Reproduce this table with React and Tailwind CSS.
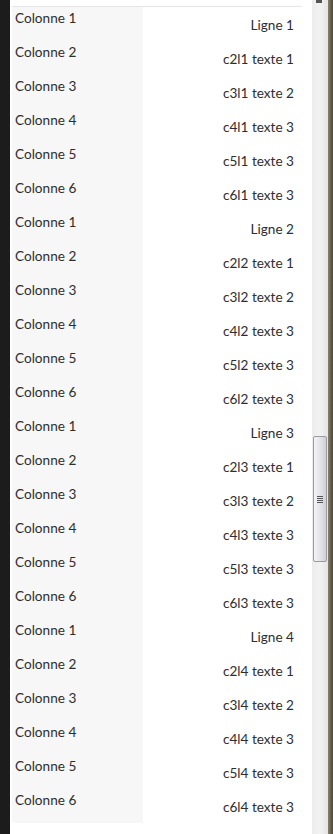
import React from "react";

const rows = [];
for (let l = 1; l <= 4; l++) {
  rows.push(["Colonne 1", `Ligne ${l}`]);
  rows.push(["Colonne 2", `c2l${l} texte 1`]);
  rows.push(["Colonne 3", `c3l${l} texte 2`]);
  rows.push(["Colonne 4", `c4l${l} texte 3`]);
  rows.push(["Colonne 5", `c5l${l} texte 3`]);
  rows.push(["Colonne 6", `c6l${l} texte 3`]);
}

export default function App() {
  return (
    <div
      className="flex w-[333px] h-[834px] overflow-hidden bg-white"
      style={{ fontFamily: "Lato, 'Open Sans', sans-serif" }}
    >
      <div className="w-[10px] shrink-0 bg-[#1c1c1c]" />
      <div className="w-[302px] shrink-0 bg-white pl-[2px] pr-[10px]">
        <div className="h-[7px] border-b border-[#e6e6e6]" />
        <div className="flex flex-col">
          {rows.map(([a, b], i) => (
            <div key={i} className="flex h-[34px]">
              <div className="w-[131px] shrink-0 bg-[#f7f7f7] pl-[3px] pt-[2px] text-[13.6px] leading-[18px] text-[#2e2e2e]">
                {a}
              </div>
              <div className="flex-1 pr-[8px] pt-[9px] text-right text-[13.6px] leading-[18px] text-[#2e2e2e]">
                {b}
              </div>
            </div>
          ))}
        </div>
      </div>
      <div className="relative w-[16px] shrink-0 bg-gradient-to-r from-[#ececec] via-[#f2f2f2] to-[#e4e4e4]">
        <div className="absolute left-[1px] top-[436px] flex h-[126px] w-[14px] items-center justify-center rounded-[2px] border border-[#9a9a9a] bg-gradient-to-r from-[#f4f4f4] via-[#e4e4ea] to-[#cfcfd6]">
          <div className="flex flex-col gap-[1px]">
            <div className="h-[1px] w-[6px] bg-[#555]" />
            <div className="h-[1px] w-[6px] bg-[#555]" />
            <div className="h-[1px] w-[6px] bg-[#555]" />
            <div className="h-[1px] w-[6px] bg-[#555]" />
          </div>
        </div>
        <div className="absolute left-[4px] top-0 h-[3px] w-[6px] bg-[#555]" />
      </div>
      <div className="w-[5px] shrink-0 bg-gradient-to-r from-[#8a8270] to-[#4a4538]" />
    </div>
  );
}
